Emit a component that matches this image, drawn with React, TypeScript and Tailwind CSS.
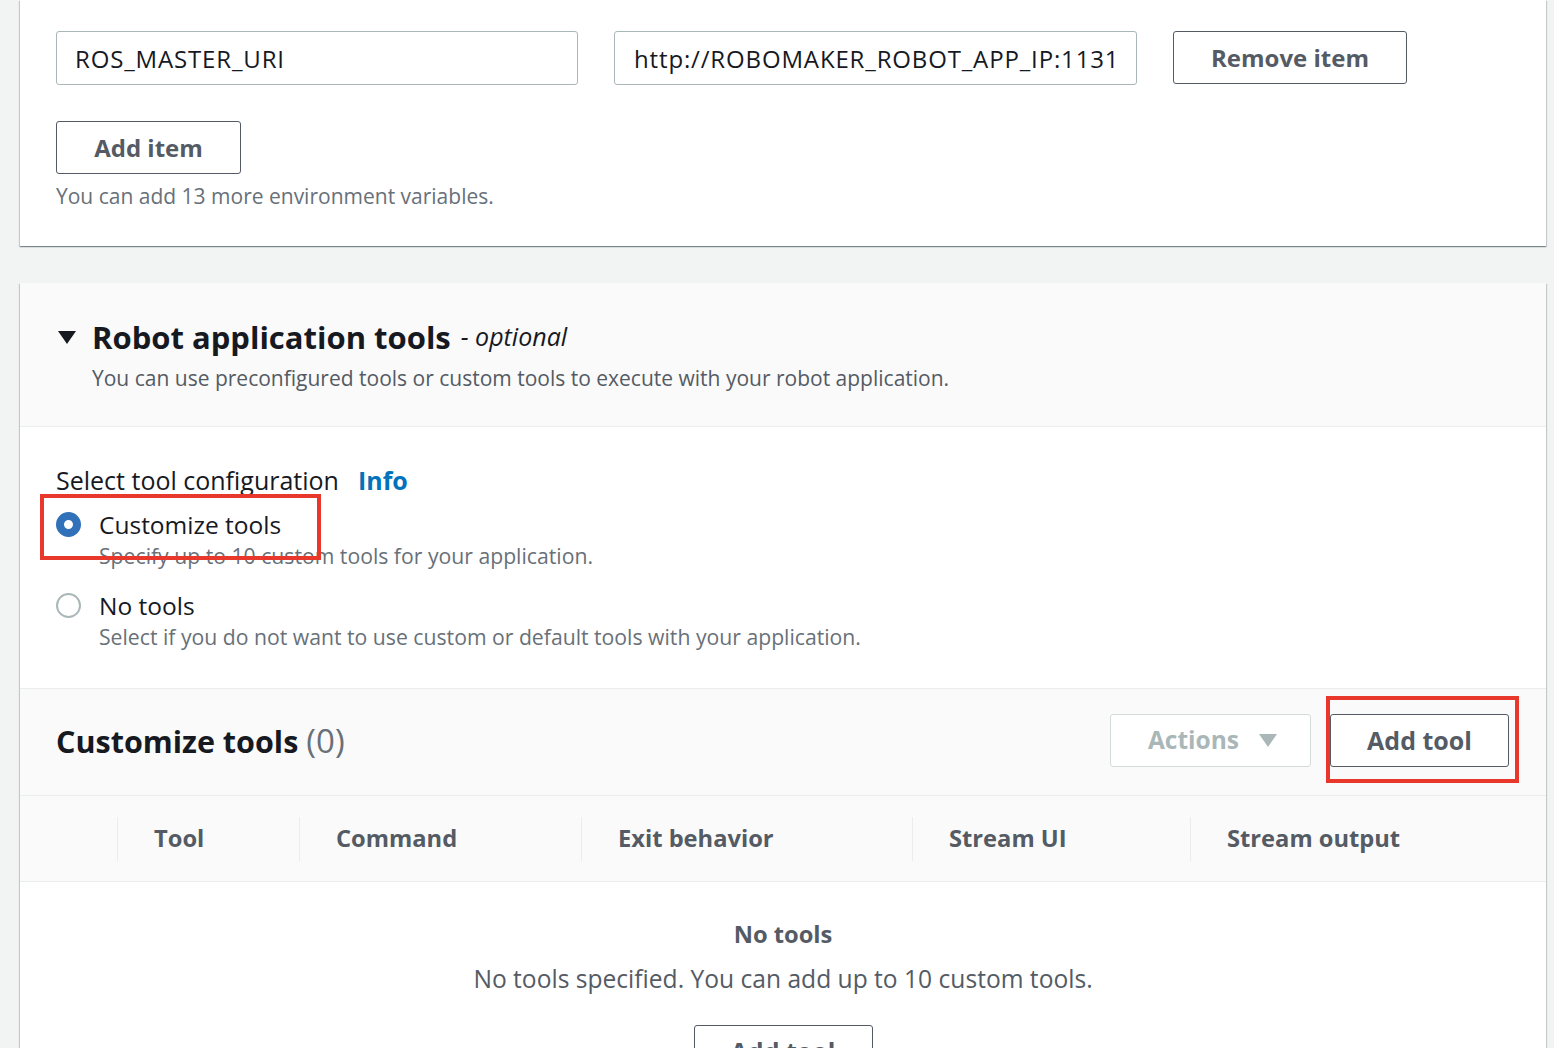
import React from "react";

const font = { fontFamily: "'Open Sans', Lato, 'Liberation Sans', sans-serif" };

function Caret({ className }: { className?: string }) {
  return (
    <svg viewBox="0 0 18 13" className={className}>
      <polygon points="0,0 18,0 9,13" fill="currentColor" />
    </svg>
  );
}

const columns = [
  { label: "Tool", w: "w-[182px]" },
  { label: "Command", w: "w-[282px]" },
  { label: "Exit behavior", w: "w-[331px]" },
  { label: "Stream UI", w: "w-[278px]" },
  { label: "Stream output", w: "flex-1" },
];

export default function App() {
  return (
    <div className="min-h-screen w-full overflow-hidden bg-[#f2f3f3] pl-[20px] pr-[8px]" style={font}>
      {/* Environment variables card */}
      <div className="bg-white shadow-[0_1px_1px_0_rgba(0,28,36,0.3),1px_1px_1px_0_rgba(0,28,36,0.15),-1px_1px_1px_0_rgba(0,28,36,0.15)] px-[36px] pt-[31px] pb-[36px]">
        <div className="flex items-start gap-[36px]">
          <div className="w-[522px] h-[54px] border border-[#aab7b8] rounded-[3px] flex items-center pl-[18px] pr-[18px] pt-[2px] text-[24px] tracking-[0.85px] text-[#16191f]">
            <span className="block overflow-hidden whitespace-nowrap">ROS_MASTER_URI</span>
          </div>
          <div className="w-[523px] h-[54px] border border-[#aab7b8] rounded-[3px] flex items-center pl-[19px] pr-[18px] pt-[2px] text-[24px] tracking-[0.85px] text-[#16191f]">
            <span className="block overflow-hidden whitespace-nowrap">http://ROBOMAKER_ROBOT_APP_IP:11311</span>
          </div>
          <button className="w-[234px] h-[53px] border border-[#545b64] rounded-[3px] text-[24px] font-bold text-[#545b64]">
            Remove item
          </button>
        </div>
        <button className="mt-[36px] w-[185px] h-[53px] border border-[#545b64] rounded-[3px] text-[24px] font-bold text-[#545b64]">
          Add item
        </button>
        <div className="mt-[8px] text-[21px] leading-[28px] text-[#687078]">
          You can add 13 more environment variables.
        </div>
      </div>

      {/* Robot application tools card */}
      <div className="mt-[37px] bg-white shadow-[0_1px_1px_0_rgba(0,28,36,0.3),1px_1px_1px_0_rgba(0,28,36,0.15),-1px_1px_1px_0_rgba(0,28,36,0.15)] relative">
        <div className="bg-[#fafafa] border-b border-[#eaeded] h-[144px] pt-[34px] pl-[38px]">
          <div className="flex items-center">
            <Caret className="w-[18px] h-[13px] text-[#16191f]" />
            <span className="ml-[16px] text-[31px] leading-[40px] font-bold text-[#16191f]">Robot application tools</span>
            <span className="ml-[10px] text-[25px] italic text-[#16191f]">- optional</span>
          </div>
          <div className="ml-[34px] mt-[6px] text-[21px] leading-[30px] text-[#545b64]">
            You can use preconfigured tools or custom tools to execute with your robot application.
          </div>
        </div>

        <div className="relative h-[261px] pl-[36px] pt-[38px]">
          <div className="flex items-center gap-[19px] text-[25px] leading-[30px]">
            <span className="text-[#16191f]">Select tool configuration</span>
            <span className="font-bold text-[#0073bb]">Info</span>
          </div>
          <div className="mt-[14px] flex items-start">
            <div className="mt-[3px] w-[25px] h-[25px] rounded-full border-[8px] border-[#3171b9] bg-white" />
            <div className="ml-[18px]">
              <div className="text-[24.5px] leading-[32px] text-[#16191f]">Customize tools</div>
              <div className="text-[21.2px] leading-[30px] text-[#687078]">Specify up to 10 custom tools for your application.</div>
            </div>
          </div>
          <div className="mt-[19px] flex items-start">
            <div className="mt-[3px] w-[25px] h-[25px] rounded-full border-2 border-[#aab7b8] bg-white" />
            <div className="ml-[18px]">
              <div className="text-[24.5px] leading-[32px] text-[#16191f]">No tools</div>
              <div className="text-[21.2px] leading-[30px] text-[#687078]">Select if you do not want to use custom or default tools with your application.</div>
            </div>
          </div>
          <div className="absolute left-[20px] top-[67px] w-[281px] h-[66px] border-[4px] border-[#e8372b]" />
        </div>

        <div className="relative bg-[#fafafa] border-t border-[#eaeded] h-[107px] flex items-start pt-[25px] pl-[36px] pr-[37px]">
          <div className="flex-1 leading-[53px]">
            <span className="text-[30.5px] font-bold text-[#16191f]">Customize tools</span>
            <span className="ml-[8px] text-[33px] text-[#687078]">(0)</span>
          </div>
          <button className="w-[201px] h-[53px] border border-[#d5dbdb] rounded-[3px] bg-white flex items-center justify-center gap-[20px] pl-[4px] text-[24.5px] font-bold text-[#aab7b8]">
            Actions
            <Caret className="w-[18px] h-[13px] text-[#aab7b8]" />
          </button>
          <button className="ml-[19px] w-[179px] h-[53px] border border-[#545b64] rounded-[3px] bg-white text-[25px] font-bold text-[#545b64]">
            Add tool
          </button>
          <div className="absolute left-[1306px] top-[7px] w-[193px] h-[87px] border-[4px] border-[#e8372b]" />
        </div>

        <div className="bg-[#fafafa] border-t border-b border-[#eaeded] h-[87px] flex items-center pl-[97px]">
          {columns.map((c) => (
            <div key={c.label} className={`${c.w} h-[44px] border-l border-[#eaeded] flex items-center pl-[36px] text-[23.7px] font-bold text-[#545b64]`}>
              {c.label}
            </div>
          ))}
        </div>

        <div className="flex flex-col items-center pt-[37px] pb-[20px]">
          <div className="text-[23.7px] leading-[30px] font-bold text-[#545b64]">No tools</div>
          <div className="mt-[14px] text-[24.6px] leading-[32px] text-[#545b64]">
            No tools specified. You can add up to 10 custom tools.
          </div>
          <button className="mt-[30px] w-[179px] h-[53px] border border-[#545b64] rounded-[3px] bg-white text-[25px] font-bold text-[#545b64]">
            Add tool
          </button>
        </div>
      </div>
    </div>
  );
}
